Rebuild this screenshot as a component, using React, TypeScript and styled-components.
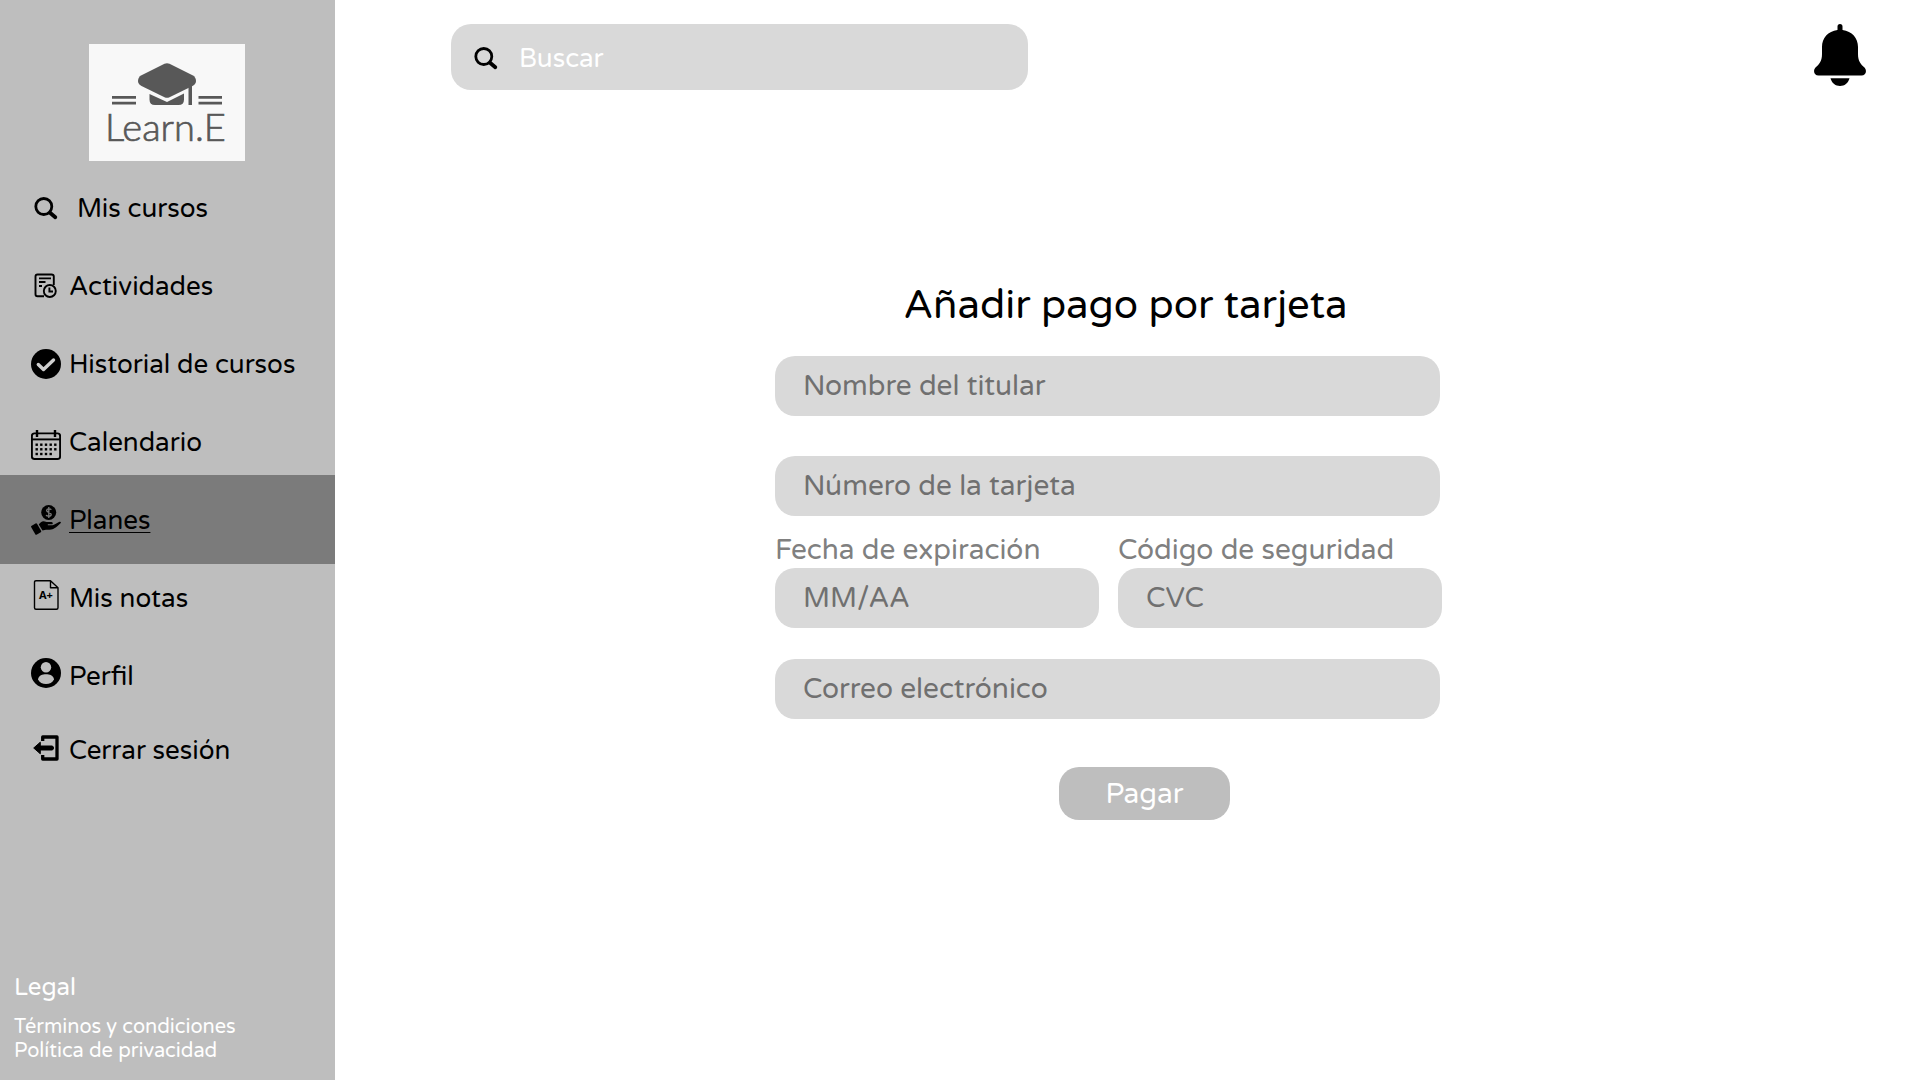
import React from "react";
import styled, { createGlobalStyle } from "styled-components";

const GlobalStyle = createGlobalStyle`
  *, *::before, *::after { box-sizing: border-box; }
  body {
    margin: 0;
    background: #ffffff;
    color: #000000;
    font-family: "Varela Round", "Noto Sans", "Open Sans", sans-serif;
  }
`;

const Page = styled.div`
  display: flex;
  min-height: 100vh;
`;

const Sidebar = styled.aside`
  display: flex;
  flex-direction: column;
  flex: 0 0 335px;
  padding-top: 44px;
  background: #bebebe;
`;

const Brand = styled.a`
  display: block;
  width: 156px;
  height: 117px;
  margin: 0 0 8px 89px;
`;

const NavList = styled.ul`
  margin: 0;
  padding: 0;
  list-style: none;
`;

const NavLink = styled.a<{ $active?: boolean; $wide?: boolean; $short?: boolean }>`
  display: flex;
  align-items: center;
  gap: ${(p) => (p.$wide ? 16 : 8)}px;
  height: ${(p) => (p.$active ? 89 : p.$short ? 70 : 78)}px;
  margin: ${(p) => (p.$active ? "-6px 0 -5px" : "0")};
  padding: 2px 0 0 31px;
  background: ${(p) => (p.$active ? "#7b7b7b" : "transparent")};
  color: #000000;
  font-size: 26px;
  line-height: 32px;
  text-decoration: ${(p) => (p.$active ? "underline" : "none")};
  text-decoration-thickness: 1px;
  text-underline-offset: 3px;
`;

const Icon30 = styled.svg`
  flex: none;
  width: 30px;
  height: 36px;
`;

const NavIcon = styled(Icon30)`
  margin-bottom: 2px;
`;

const Legal = styled.footer`
  display: flex;
  flex-direction: column;
  align-items: flex-start;
  margin-top: auto;
  padding: 0 14px 17px;
  color: #ffffff;
`;

const LegalTitle = styled.h2`
  margin: 0 0 11px;
  font-size: 24px;
  font-weight: 400;
  line-height: 32px;
`;

const LegalLink = styled.a`
  color: inherit;
  font-size: 20px;
  line-height: 24px;
  text-decoration: none;
`;

const Content = styled.div`
  flex: 1;
  min-width: 0;
`;

const TopBar = styled.header`
  display: flex;
  align-items: flex-start;
  justify-content: space-between;
  padding: 24px 54px 0 116px;
`;

const SearchBox = styled.label`
  display: flex;
  align-items: center;
  gap: 18px;
  width: 577px;
  height: 66px;
  padding: 2px 20px 0;
  border-radius: 20px;
  background: #d9d9d9;
`;

const SearchInput = styled.input`
  flex: 1;
  min-width: 0;
  padding: 0;
  border: 0;
  outline: 0;
  background: transparent;
  color: #ffffff;
  font: inherit;
  font-size: 26px;
  &::placeholder { color: #ffffff; opacity: 1; }
`;

const BellButton = styled.button`
  width: 52px;
  height: 62px;
  padding: 0;
  border: 0;
  background: none;
  cursor: pointer;
  svg { display: block; }
`;

const Main = styled.main`
  display: flex;
  justify-content: center;
  padding: 191px 38px 40px 0;
`;

const PaymentForm = styled.form`
  display: flex;
  flex-direction: column;
  width: 667px;
`;

const Title = styled.h1`
  margin: 0 0 27px;
  padding-left: 34px;
  font-size: 40px;
  font-weight: 400;
  line-height: 48px;
  text-align: center;
`;

const Input = styled.input`
  display: block;
  width: 100%;
  max-width: 665px;
  height: 60px;
  padding: 0 28px;
  border: 0;
  border-radius: 20px;
  background: #d9d9d9;
  color: #707070;
  font: inherit;
  font-size: 28px;
  &::placeholder { color: #707070; opacity: 1; }
`;

const Stack = styled.div`
  display: grid;
  gap: 40px;
`;

const FieldPair = styled.div`
  display: grid;
  grid-template-columns: 1fr 1fr;
  gap: 19px;
  margin: 16px 0 31px;
`;

const FieldLabel = styled.label`
  display: block;
  color: #808080;
  font-size: 28px;
  line-height: 36px;
  white-space: nowrap;
`;

const PayButton = styled.button`
  align-self: center;
  width: 171px;
  height: 53px;
  margin: 48px 0 0 72px;
  padding: 0;
  border: 0;
  border-radius: 20px;
  background: #bebebe;
  color: #ffffff;
  font: inherit;
  font-size: 28px;
  line-height: 36px;
  cursor: pointer;
`;

const Logo = () => (
  <svg width="156" height="117" viewBox="0 0 156 117" role="img" aria-label="Learn.E">
    <rect width="156" height="117" fill="#f8f8f8" />
    <g fill="#585858">
      <path d="M75.5 19.8Q78 18.6 80.5 19.8L103.5 31.3Q107 33.3 107 37Q107 40.2 103.5 42L80.5 53.2Q78 54.4 75.5 53.2L52.5 42Q49 40.2 49 37Q49 33.3 52.5 31.3Z" />
      <path d="M60.5 50L78 58L95 49.5V55.500Q95 61 89.500 61H66Q60.5 61 60.5 55.500Z" />
      <path d="M99.500 41L103 39V61H99.500Z" />
      <path d="M23 52h24v2.800H23zM23 57.800h24v2.800H23zM109.500 52H133v2.800h-23.500zM109.500 57.800H133v2.800h-23.500z" />
      <text x="16" y="97" fontFamily="Lato, Open Sans, sans-serif" fontWeight="300" fontSize="38" stroke="#585858" strokeWidth="0.700">Learn.E</text>
    </g>
  </svg>
);

const Search = () => (
  <g fill="none" stroke="currentColor" strokeLinecap="round">
    <circle cx="12.800" cy="16.500" r="8" strokeWidth="2.800" />
    <path d="M19 22.700L24.300 27.300" strokeWidth="3.800" />
  </g>
);

const Activities = () => (
  <g fill="none" stroke="currentColor" strokeWidth="1.900">
    <path d="M13 28.200H6.500Q4.500 28.200 4.500 26.200V8.500Q4.500 6.500 6.500 6.500H20.500Q22.800 6.500 22.800 8.500V17" />
    <path d="M8 10.400H20M8 14H14.500M8 18H11" />
    <circle cx="18.800" cy="23" r="6" />
    <path d="M18.400 19.500V23.500H22" />
  </g>
);

const History = () => (
  <>
    <circle cx="15" cy="18" r="15" />
    <path d="M7.300 18.500L12.500 23.500L22.500 14" fill="none" stroke="#cfcfcf" strokeWidth="3.400" strokeLinecap="round" strokeLinejoin="round" />
  </>
);

const Calendar = () => (
  <>
    <rect x="0.900" y="9.400" width="28.200" height="25.600" rx="2.500" fill="none" stroke="currentColor" strokeWidth="1.900" />
    <path d="M1 15.400H29" stroke="currentColor" strokeWidth="1.900" />
    <path d="M6 6V13M24 6V13" stroke="currentColor" strokeWidth="2.400" />
    {[20.7, 25.3, 30].map((y, row) =>
      [5.7, 10.3, 15, 19.7, 24.3].slice(0, row === 2 ? 4 : 5).map((x) => (
        <rect key={`${x}-${y}`} x={x - 1.2} y={y - 1.2} width="2.400" height="2.400" />
      )),
    )}
  </>
);

const Plans = () => (
  <>
    <circle cx="17.700" cy="10.500" r="7.500" />
    <path d="M20.300 7.800C19.600 6.500 15.600 6.400 15.600 8.500C15.600 10.800 20.200 9.800 20.200 12.400C20.200 14.700 15.800 14.500 15.100 12.900M17.800 5V16" fill="none" stroke="#7b7b7b" strokeWidth="1.300" />
    <path d="M0.300 24L5 21.300Q5.600 21.200 6 21.700L10.200 29Q10.400 29.700 9.800 30.200L5.500 32.800Q4.800 33 4.400 32.500L0.100 25Q-0.100 24.300 0.300 24Z" />
    <path d="M7.800 22.600C9.200 20.500 10.500 19.200 12.600 19.200C14.500 19.200 15 20 16.800 20H20.500Q22 20.300 21.800 21.400Q21.600 22.200 20.500 22.300H16.800V23.200H21.500C24 22.900 26.800 20.300 28.500 19.800Q30 19.500 29.900 20.700C28.500 22.500 24.500 26 21.500 27.300C19 28.300 14.500 26.800 11.500 28.600Z" />
  </>
);

const Grades = () => (
  <>
    <path d="M5 .700H19.500L27 7.700V27.800Q27 29.300 25.500 29.300H5Q3.500 29.300 3.500 27.800V2.200Q3.500 .700 5 .700ZM19.500 .900V7.700H27" fill="none" stroke="currentColor" strokeWidth="1.400" strokeLinejoin="round" />
    <text x="8" y="19" fontFamily="Noto Sans, sans-serif" fontSize="11" fontWeight="700">A+</text>
  </>
);

const Profile = () => (
  <>
    <circle cx="15" cy="15" r="15" />
    <circle cx="15" cy="9.300" r="5.200" fill="#bebebe" />
    <path d="M7 21.500C7.500 17.500 11.500 16.300 15 16.300S22.500 17.500 23 21.500C21.500 24.500 18.500 26 15 26S8.500 24.500 7 21.500Z" fill="#bebebe" />
  </>
);

const Logout = () => (
  <>
    <path d="M11.700 9V5H26V27H11.700V23" fill="none" stroke="currentColor" strokeWidth="3.300" strokeLinejoin="round" />
    <path d="M2.700 16L9.300 10.200V14H21Q22.500 14.200 22.500 16T21 18H9.300V21.800Z" stroke="currentColor" strokeLinejoin="round" />
  </>
);

const navItems = [
  { label: "Mis cursos", Icon: Search, wide: true },
  { label: "Actividades", Icon: Activities },
  { label: "Historial de cursos", Icon: History },
  { label: "Calendario", Icon: Calendar },
  { label: "Planes", Icon: Plans, active: true },
  { label: "Mis notas", Icon: Grades },
  { label: "Perfil", Icon: Profile },
  { label: "Cerrar sesión", Icon: Logout, short: true },
];

export default function App() {
  return (
    <Page>
      <GlobalStyle />
      <Sidebar>
        <Brand href="#inicio"><Logo /></Brand>
        <nav aria-label="Principal">
          <NavList>
            {navItems.map(({ label, Icon, active, wide, short }) => (
              <li key={label}>
                <NavLink href="#" $active={active} $wide={wide} $short={short} aria-current={active ? "page" : undefined}>
                  <NavIcon viewBox="0 0 30 36" fill="currentColor" aria-hidden="true"><Icon /></NavIcon>
                  <span>{label}</span>
                </NavLink>
              </li>
            ))}
          </NavList>
        </nav>
        <Legal>
          <LegalTitle>Legal</LegalTitle>
          <LegalLink href="#terminos">Términos y condiciones</LegalLink>
          <LegalLink href="#privacidad">Política de privacidad</LegalLink>
        </Legal>
      </Sidebar>
      <Content>
        <TopBar>
          <SearchBox>
            <Icon30 viewBox="0 0 30 36" fill="currentColor" aria-hidden="true"><Search /></Icon30>
            <SearchInput type="search" placeholder="Buscar" aria-label="Buscar" />
          </SearchBox>
          <BellButton type="button" aria-label="Notificaciones">
            <svg width="52" height="62" viewBox="0 0 52 62" aria-hidden="true">
              <path d="M23.500 6V2.500a2.500 2.500 0 0 1 5 0V6C38 7.200 44 14 44 23V30C44 37 46.500 40 50.500 43.500C53.500 47 51.500 51.500 47.500 51.500H4.500C.5 51.500-1.500 47 1.500 43.500C5.500 40 8 37 8 30V23C8 14 14 7.200 23.500 6Z" />
              <path d="M16.500 54.300H35.500C34 59.500 30.500 62 26 62S18 59.500 16.500 54.300Z" />
            </svg>
          </BellButton>
        </TopBar>
        <Main>
          <PaymentForm onSubmit={(e) => e.preventDefault()}>
            <Title>Añadir pago por tarjeta</Title>
            <Stack>
              <Input type="text" placeholder="Nombre del titular" aria-label="Nombre del titular" />
              <Input type="text" placeholder="Número de la tarjeta" aria-label="Número de la tarjeta" />
            </Stack>
            <FieldPair>
              <div>
                <FieldLabel htmlFor="expiry">Fecha de expiración</FieldLabel>
                <Input id="expiry" type="text" placeholder="MM/AA" />
              </div>
              <div>
                <FieldLabel htmlFor="cvc">Código de seguridad</FieldLabel>
                <Input id="cvc" type="text" placeholder="CVC" />
              </div>
            </FieldPair>
            <Input type="email" placeholder="Correo electrónico" aria-label="Correo electrónico" />
            <PayButton type="submit">Pagar</PayButton>
          </PaymentForm>
        </Main>
      </Content>
    </Page>
  );
}
